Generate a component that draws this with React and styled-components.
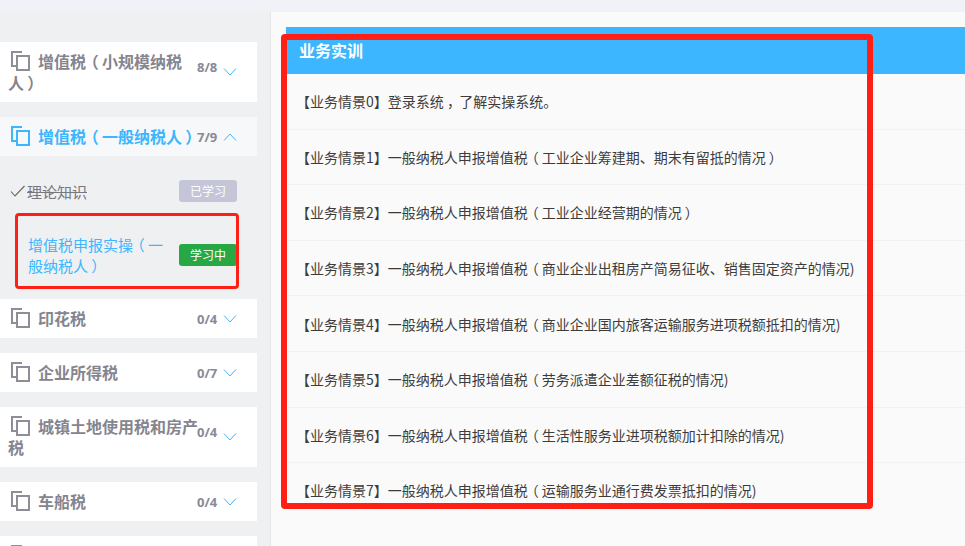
import React from "react";
import styled, { createGlobalStyle } from "styled-components";

const GlobalStyle = createGlobalStyle`
  html, body {
    margin: 0;
    padding: 0;
    width: 965px;
    height: 546px;
    overflow: hidden;
    background: #fafafa;
    font-family: "Noto Sans CJK SC", "Liberation Sans", sans-serif;
  }
  * { box-sizing: border-box; }
`;

const Page = styled.div`
  position: relative;
  width: 965px;
  height: 546px;
  overflow: hidden;
`;

const TopStrip = styled.div`
  height: 12px;
  background: #f0f2f7;
`;

const Body = styled.div`
  display: flex;
  height: 534px;
`;

const Sidebar = styled.div`
  width: 271px;
  padding: 30px 13px 0 0;
  background: #eff0f2;
  border-right: 1px solid #e6e6e6;
  display: flex;
  flex-direction: column;
  gap: 15px;
  flex-shrink: 0;
  overflow: hidden;
`;

const Card = styled.div`
  display: flex;
  align-items: center;
  flex-shrink: 0;
  padding: 9px 0 9px 8px;
  background: ${(props) => (props.$active ? "#f7f8fa" : "#fff")};
`;

const Title = styled.div`
  width: 191px;
  min-height: 21px;
  font-size: 16px;
  font-weight: 700;
  line-height: 21px;
  color: ${(props) => (props.$active ? "#3cb6ff" : "#85858f")};
`;

const CopyIcon = styled.svg`
  display: inline-block;
  width: 21px;
  height: 20px;
  margin: 0 7px 0 2px;
  vertical-align: -3px;
`;

const Count = styled.span`
  width: 22px;
  margin: ${(props) => (props.$tall ? "-11px" : "0")} 0 0 -2px;
  font-family: "Open Sans", sans-serif;
  font-size: 13px;
  font-weight: 700;
  color: #8a8a96;
`;

const Chevron = styled.svg`
  width: 14px;
  height: 8px;
  margin-left: 4px;
`;

const ChildList = styled.div`
  display: flex;
  flex-direction: column;
  gap: 32px;
  height: 128px;
  margin-top: -15px;
  padding: 24px 20px 8px 0;
  flex-shrink: 0;
`;

const ChildRow = styled.div`
  display: flex;
  align-items: center;
  justify-content: space-between;
  padding-left: ${(props) => (props.$indent ? "28px" : "10px")};
`;

const ChildText = styled.div`
  display: flex;
  align-items: center;
  gap: 2px;
  width: ${(props) => (props.$indent ? "145px" : "auto")};
  font-size: 15px;
  line-height: 21px;
  color: ${(props) => (props.$current ? "#3cb6ff" : "#77777f")};
`;

const Struck = styled.span`
  text-decoration: line-through;
`;

const Badge = styled.span`
  width: 58px;
  height: 22px;
  border-radius: 3px;
  font-size: 12px;
  line-height: 22px;
  text-align: center;
  color: #fff;
  background: ${(props) => (props.$current ? "#28a745" : "#c5c5d8")};
`;

const Main = styled.div`
  flex: 1;
  padding: 15px 0 0 15px;
  background: #fafafa;
`;

const Header = styled.div`
  height: 47px;
  padding: 11px 0 0 13px;
  font-size: 16px;
  font-weight: 700;
  line-height: 24px;
  color: #fff;
  background: #3cb6ff;
`;

const RowList = styled.div`
  height: 431px;
  overflow: hidden;
`;

const Row = styled.div`
  display: flex;
  align-items: center;
  height: 55.6px;
  padding-left: 10px;
  border-bottom: 1px solid #f2f2f2;
  font-size: 14px;
  color: #3c3c3c;
  white-space: nowrap;
`;

// proportional glyph plus even padding keeps it centred in its cell
const Punct = styled.span`
  font-feature-settings: "palt";
  padding: 0 ${(props) => props.$pad}em;
`;

const Outline = styled.div`
  position: absolute;
  left: ${(props) => props.$left}px;
  top: ${(props) => props.$top}px;
  width: ${(props) => props.$width}px;
  height: ${(props) => props.$height}px;
  border: ${(props) => props.$weight}px solid #ff1f14;
  border-radius: 4px;
  pointer-events: none;
`;

const cards = [
  { name: "增值税（小规模纳税人）", count: "8/8", tall: true },
  { name: "增值税（一般纳税人）", count: "7/9", active: true },
  { name: "印花税", count: "0/4" },
  { name: "企业所得税", count: "0/7" },
  { name: "城镇土地使用税和房产税", count: "0/4", tall: true },
  { name: "车船税", count: "0/4" },
  { name: "" },
];

const scenes = [
  "【业务情景0】登录系统，了解实操系统。",
  "【业务情景1】一般纳税人申报增值税（工业企业筹建期、期末有留抵的情况）",
  "【业务情景2】一般纳税人申报增值税（工业企业经营期的情况）",
  "【业务情景3】一般纳税人申报增值税（商业企业出租房产简易征收、销售固定资产的情况)",
  "【业务情景4】一般纳税人申报增值税（商业企业国内旅客运输服务进项税额抵扣的情况)",
  "【业务情景5】一般纳税人申报增值税（劳务派遣企业差额征税的情况)",
  "【业务情景6】一般纳税人申报增值税（生活性服务业进项税额加计扣除的情况)",
  "【业务情景7】一般纳税人申报增值税（运输服务业通行费发票抵扣的情况)",
];

const pads = { "（": 0.25, "）": 0.25, "，": 0.3 };

const Cjk = ({ text }) =>
  text.split(/([（），])/).map((part, i) =>
    pads[part] ? (
      <Punct key={i} $pad={pads[part]}>
        {part}
      </Punct>
    ) : (
      part
    )
  );

const Copy = ({ color }) => (
  <CopyIcon viewBox="0 0 21 20" fill="none" stroke={color} strokeWidth="2">
    <path d="M12 1H2v14h4" />
    <rect x="7" y="5" width="12" height="14" />
  </CopyIcon>
);

const SectionCard = ({ name, count, tall, active }) => {
  const tone = active ? "#3cb6ff" : "#8e8e99";
  return (
    <Card $active={active}>
      <Title $active={active}>
        <Copy color={tone} />
        <Cjk text={name} />
      </Title>
      {count && <Count $tall={tall}>{count}</Count>}
      {count && (
        <Chevron viewBox="0 0 14 8" fill="none" stroke="#3cb6ff" strokeWidth="1">
          <path d={active ? "M1 7.5 7 1l6 6.5" : "M1 .5 7 7l6-6.5"} />
        </Chevron>
      )}
    </Card>
  );
};

const App = () => (
  <Page>
    <GlobalStyle />
    <TopStrip />
    <Body>
      <Sidebar>
        {cards.map((card, i) => (
          <React.Fragment key={i}>
            <SectionCard {...card} />
            {card.active && (
              <ChildList>
                <ChildRow>
                  <ChildText>
                    <svg width="15" height="12" viewBox="0 0 15 12" fill="none" stroke="#666" strokeWidth="1.1">
                      <path d="M1 6.5 5 11 14.500 1" />
                    </svg>
                    <Struck>理论知识</Struck>
                  </ChildText>
                  <Badge>已学习</Badge>
                </ChildRow>
                <ChildRow $indent>
                  <ChildText $indent $current>
                    <span>
                      <Cjk text="增值税申报实操（一般纳税人）" />
                    </span>
                  </ChildText>
                  <Badge $current>学习中</Badge>
                </ChildRow>
              </ChildList>
            )}
          </React.Fragment>
        ))}
      </Sidebar>
      <Main>
        <Header>业务实训</Header>
        <RowList>
          {scenes.map((scene) => (
            <Row key={scene}>
              <span>
                <Cjk text={scene} />
              </span>
            </Row>
          ))}
        </RowList>
      </Main>
    </Body>
    <Outline $left={15} $top={213} $width={224} $height={76} $weight={3} />
    <Outline $left={281} $top={34} $width={592} $height={475} $weight={6} />
  </Page>
);

export default App;
